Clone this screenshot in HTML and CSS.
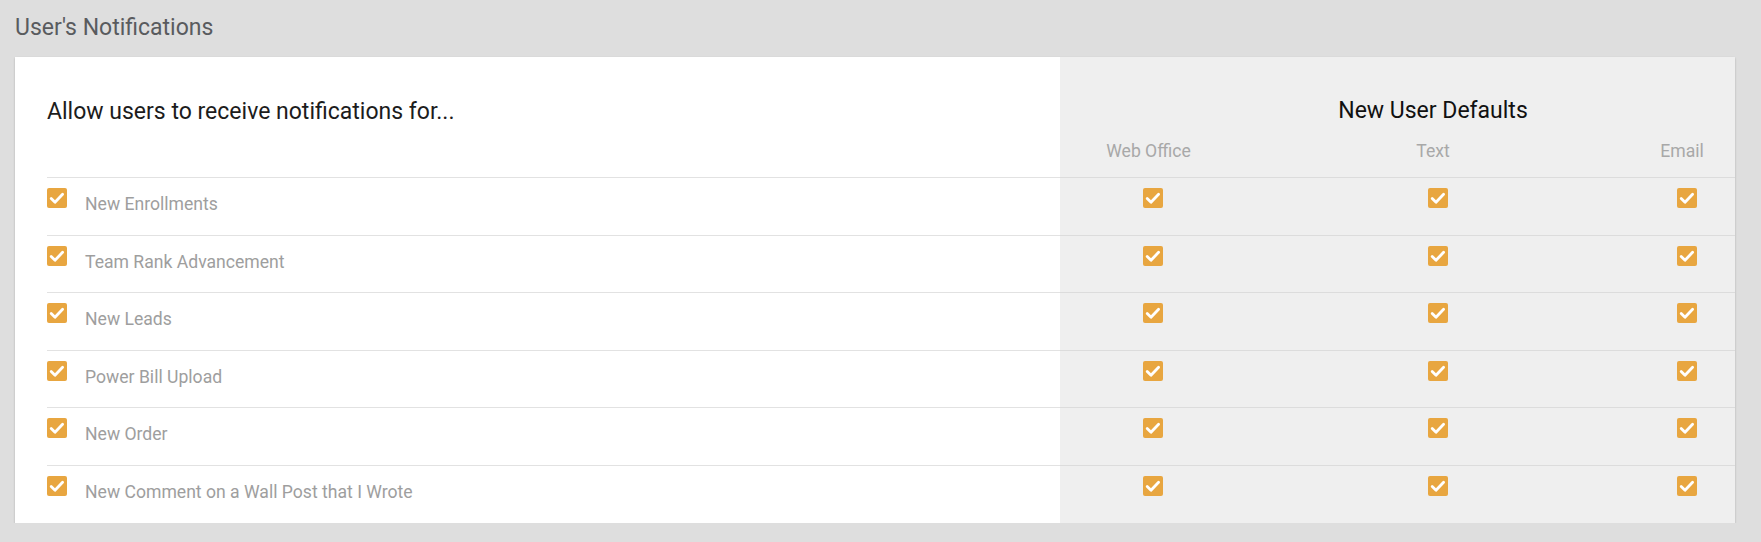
FILE: index.html
```html
<!DOCTYPE html>
<html lang="en">
<head>
<meta charset="utf-8">
<title>User's Notifications</title>
<link rel="stylesheet" href="styles.css">
</head>
<body>
<div class="page">
  <h1 class="page-title">User's Notifications</h1>
  <div class="card">
    <div class="head">
      <div class="head-main">Allow users to receive notifications for...</div>
      <div class="head-defaults">
        <div class="defaults-title">New User Defaults</div>
        <div class="col-label">Web Office</div>
        <div class="col-label">Text</div>
        <div class="col-label">Email</div>
      </div>
    </div>

    <div class="row">
      <div class="row-main"><span class="cb"><svg viewBox="0 0 20 20"><path d="M4.2 10.6 L8 14.3 L15.6 6.3"/></svg></span><span class="label">New Enrollments</span></div>
      <div class="row-defaults">
        <span class="cb cb-col"><svg viewBox="0 0 20 20"><path d="M4.2 10.6 L8 14.3 L15.6 6.3"/></svg></span>
        <span class="cb cb-col"><svg viewBox="0 0 20 20"><path d="M4.2 10.6 L8 14.3 L15.6 6.3"/></svg></span>
        <span class="cb cb-col"><svg viewBox="0 0 20 20"><path d="M4.2 10.6 L8 14.3 L15.6 6.3"/></svg></span>
      </div>
    </div>
    <div class="row">
      <div class="row-main"><span class="cb"><svg viewBox="0 0 20 20"><path d="M4.2 10.6 L8 14.3 L15.6 6.3"/></svg></span><span class="label">Team Rank Advancement</span></div>
      <div class="row-defaults">
        <span class="cb cb-col"><svg viewBox="0 0 20 20"><path d="M4.2 10.6 L8 14.3 L15.6 6.3"/></svg></span>
        <span class="cb cb-col"><svg viewBox="0 0 20 20"><path d="M4.2 10.6 L8 14.3 L15.6 6.3"/></svg></span>
        <span class="cb cb-col"><svg viewBox="0 0 20 20"><path d="M4.2 10.6 L8 14.3 L15.6 6.3"/></svg></span>
      </div>
    </div>
    <div class="row">
      <div class="row-main"><span class="cb"><svg viewBox="0 0 20 20"><path d="M4.2 10.6 L8 14.3 L15.6 6.3"/></svg></span><span class="label">New Leads</span></div>
      <div class="row-defaults">
        <span class="cb cb-col"><svg viewBox="0 0 20 20"><path d="M4.2 10.6 L8 14.3 L15.6 6.3"/></svg></span>
        <span class="cb cb-col"><svg viewBox="0 0 20 20"><path d="M4.2 10.6 L8 14.3 L15.6 6.3"/></svg></span>
        <span class="cb cb-col"><svg viewBox="0 0 20 20"><path d="M4.2 10.6 L8 14.3 L15.6 6.3"/></svg></span>
      </div>
    </div>
    <div class="row">
      <div class="row-main"><span class="cb"><svg viewBox="0 0 20 20"><path d="M4.2 10.6 L8 14.3 L15.6 6.3"/></svg></span><span class="label">Power Bill Upload</span></div>
      <div class="row-defaults">
        <span class="cb cb-col"><svg viewBox="0 0 20 20"><path d="M4.2 10.6 L8 14.3 L15.6 6.3"/></svg></span>
        <span class="cb cb-col"><svg viewBox="0 0 20 20"><path d="M4.2 10.6 L8 14.3 L15.6 6.3"/></svg></span>
        <span class="cb cb-col"><svg viewBox="0 0 20 20"><path d="M4.2 10.6 L8 14.3 L15.6 6.3"/></svg></span>
      </div>
    </div>
    <div class="row">
      <div class="row-main"><span class="cb"><svg viewBox="0 0 20 20"><path d="M4.2 10.6 L8 14.3 L15.6 6.3"/></svg></span><span class="label">New Order</span></div>
      <div class="row-defaults">
        <span class="cb cb-col"><svg viewBox="0 0 20 20"><path d="M4.2 10.6 L8 14.3 L15.6 6.3"/></svg></span>
        <span class="cb cb-col"><svg viewBox="0 0 20 20"><path d="M4.2 10.6 L8 14.3 L15.6 6.3"/></svg></span>
        <span class="cb cb-col"><svg viewBox="0 0 20 20"><path d="M4.2 10.6 L8 14.3 L15.6 6.3"/></svg></span>
      </div>
    </div>
    <div class="row">
      <div class="row-main"><span class="cb"><svg viewBox="0 0 20 20"><path d="M4.2 10.6 L8 14.3 L15.6 6.3"/></svg></span><span class="label">New Comment on a Wall Post that I Wrote</span></div>
      <div class="row-defaults">
        <span class="cb cb-col"><svg viewBox="0 0 20 20"><path d="M4.2 10.6 L8 14.3 L15.6 6.3"/></svg></span>
        <span class="cb cb-col"><svg viewBox="0 0 20 20"><path d="M4.2 10.6 L8 14.3 L15.6 6.3"/></svg></span>
        <span class="cb cb-col"><svg viewBox="0 0 20 20"><path d="M4.2 10.6 L8 14.3 L15.6 6.3"/></svg></span>
      </div>
    </div>
  </div>
</div>
</body>
</html>
```

FILE: styles.css
```css
* { box-sizing: border-box; }

html, body {
  margin: 0;
  padding: 0;
  background: #dedede;
  font-family: Roboto, "Liberation Sans", Arial, sans-serif;
}

.page {
  padding: 15px 0 0 15px;
}

.page-title {
  margin: 0 0 16px;
  font-size: 23px;
  line-height: 26px;
  font-weight: 400;
  color: #595b5e;
}

.card {
  width: 1720px;
  background: #fff;
  padding-left: 32px;
  box-shadow: 0 1px 2px rgba(0, 0, 0, 0.22);
}

.head {
  display: flex;
  height: 120px;
}

.head-main {
  width: 1013px;
  padding-top: 42px;
  font-size: 23px;
  line-height: 26px;
  color: #1c1c1c;
}

.head-defaults {
  width: 675px;
  background: #efefef;
  display: grid;
  grid-template-columns: 177px 392px 106px;
  align-content: start;
  padding-top: 41px;
}

.defaults-title {
  grid-column: 2;
  grid-row: 1;
  text-align: center;
  font-size: 23px;
  line-height: 26px;
  color: #111;
  white-space: nowrap;
}

.col-label {
  grid-row: 2;
  margin-top: 17px;
  text-align: center;
  font-size: 17.6px;
  line-height: 21px;
  color: #a8a8a8;
}

.row {
  display: flex;
  height: 57.6px;
}

.row-main {
  width: 1013px;
  border-top: 1px solid #e2e2e2;
  display: flex;
  align-items: flex-start;
  padding-top: 10px;
}

.row-defaults {
  width: 675px;
  background: #efefef;
  border-top: 1px solid #dcdcdc;
  display: grid;
  grid-template-columns: 177px 392px 106px;
  justify-items: center;
  align-items: start;
  padding-top: 10px;
}

.cb {
  display: block;
  width: 20px;
  height: 20px;
  flex: none;
  border-radius: 2px;
  background: #e8a640;
}

.cb svg {
  display: block;
  width: 20px;
  height: 20px;
}

.cb path {
  fill: none;
  stroke: #fff;
  stroke-width: 2.8;
  stroke-linecap: round;
  stroke-linejoin: round;
}

.cb-col {
  margin-left: 9px;
}

.label {
  margin-left: 18px;
  margin-top: 6px;
  font-size: 17.6px;
  line-height: 21px;
  color: #9e9e9e;
}
```
